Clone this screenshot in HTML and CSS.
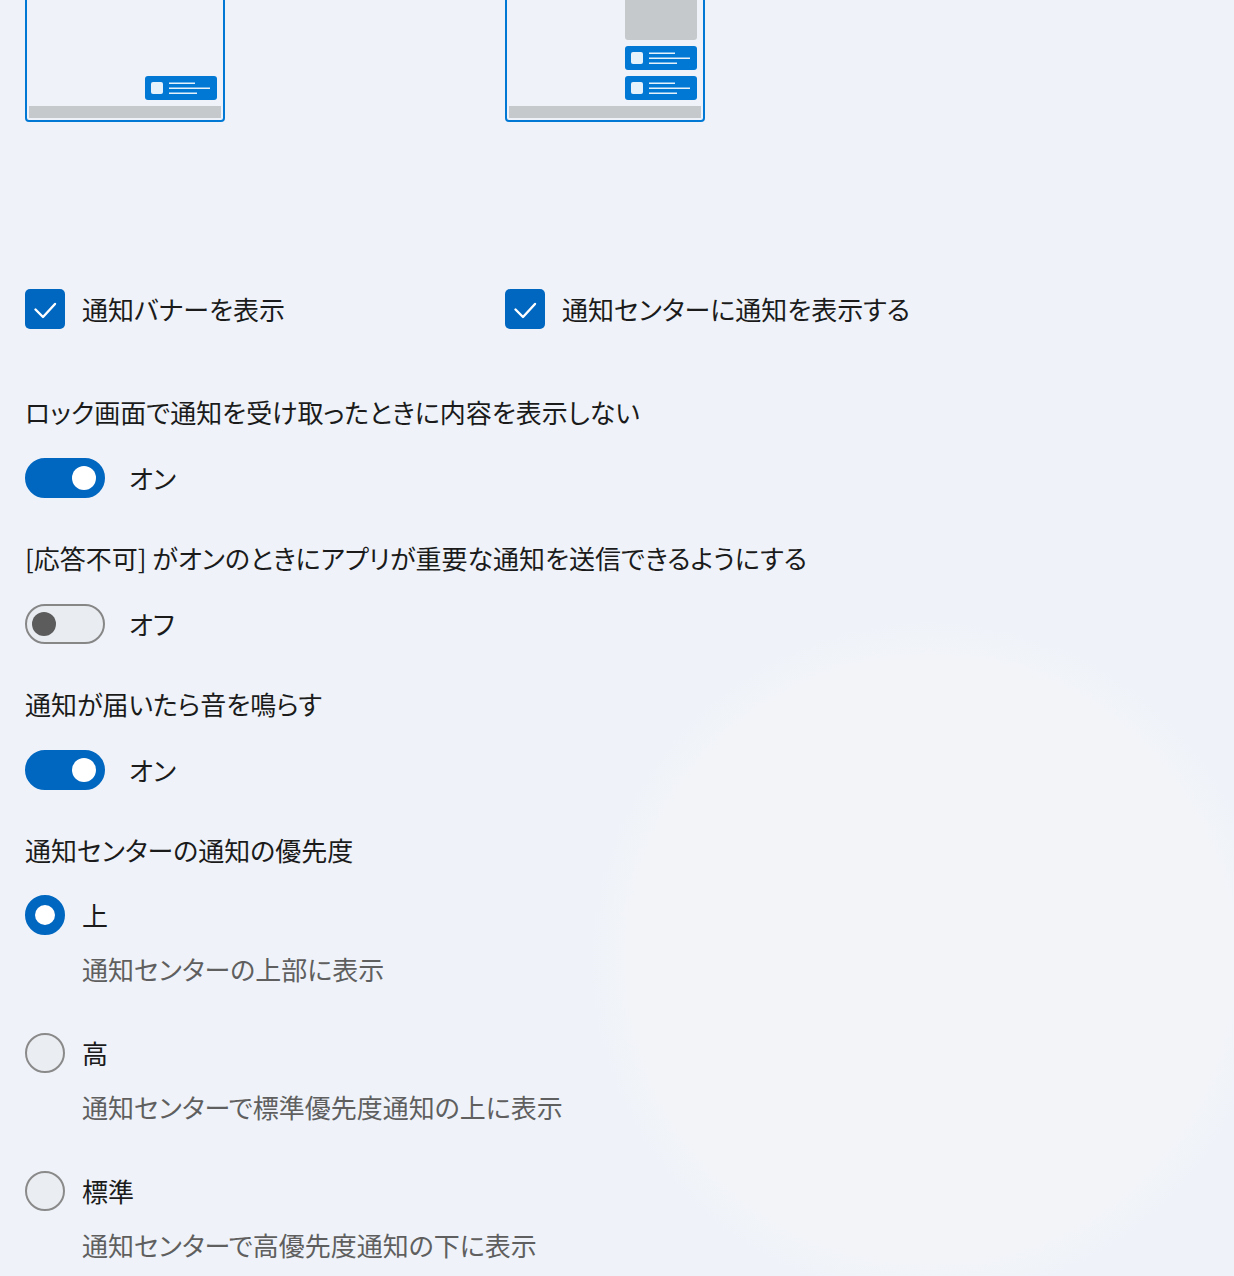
FILE: index.html
```html
<!DOCTYPE html>
<html lang="ja">
<head>
    <meta charset="UTF-8">
    <meta name="viewport" content="width=device-width, initial-scale=1.0">
    <title>通知</title>
    <link rel="stylesheet" href="styles.css">
</head>
<body>
    <div class="page">
        <div class="previews">
            <div class="preview">
                <div class="stack">
                    <svg class="banner" width="72" height="24" viewBox="0 0 72 24">
                        <rect width="72" height="24" rx="3" fill="#0078d4"/>
                        <rect x="6" y="6" width="12" height="12" rx="2" fill="#e5f1fb"/>
                        <rect x="24" y="6.5" width="26" height="1.5" fill="#e5f1fb"/>
                        <rect x="24" y="11.5" width="41" height="1.5" fill="#e5f1fb"/>
                        <rect x="24" y="16.5" width="28" height="1.5" fill="#e5f1fb"/>
                    </svg>
                </div>
                <div class="taskbar"></div>
            </div>
            <div class="preview">
                <div class="stack">
                    <div class="center-block"></div>
                    <svg class="banner" width="72" height="24" viewBox="0 0 72 24">
                        <rect width="72" height="24" rx="3" fill="#0078d4"/>
                        <rect x="6" y="6" width="12" height="12" rx="2" fill="#e5f1fb"/>
                        <rect x="24" y="6.5" width="26" height="1.5" fill="#e5f1fb"/>
                        <rect x="24" y="11.5" width="41" height="1.5" fill="#e5f1fb"/>
                        <rect x="24" y="16.5" width="28" height="1.5" fill="#e5f1fb"/>
                    </svg>
                    <svg class="banner" width="72" height="24" viewBox="0 0 72 24">
                        <rect width="72" height="24" rx="3" fill="#0078d4"/>
                        <rect x="6" y="6" width="12" height="12" rx="2" fill="#e5f1fb"/>
                        <rect x="24" y="6.5" width="26" height="1.5" fill="#e5f1fb"/>
                        <rect x="24" y="11.5" width="41" height="1.5" fill="#e5f1fb"/>
                        <rect x="24" y="16.5" width="28" height="1.5" fill="#e5f1fb"/>
                    </svg>
                </div>
                <div class="taskbar"></div>
            </div>
        </div>

        <div class="checks">
            <div class="check-row">
                <span class="checkbox">
                    <svg width="40" height="40" viewBox="0 0 40 40"><path d="M10.5 20.5l7.5 7.5 12-13" fill="none" stroke="#fff" stroke-width="2.4" stroke-linecap="round" stroke-linejoin="round"/></svg>
                </span>
                <span class="label">通知バナーを表示</span>
            </div>
            <div class="check-row">
                <span class="checkbox">
                    <svg width="40" height="40" viewBox="0 0 40 40"><path d="M10.5 20.5l7.5 7.5 12-13" fill="none" stroke="#fff" stroke-width="2.4" stroke-linecap="round" stroke-linejoin="round"/></svg>
                </span>
                <span class="label">通知センターに通知を表示する</span>
            </div>
        </div>

        <div class="setting">
            <div class="title">ロック画面で通知を受け取ったときに内容を表示しない</div>
            <div class="toggle-row">
                <span class="toggle on"><span class="knob"></span></span>
                <span class="state">オン</span>
            </div>
        </div>

        <div class="setting">
            <div class="title">[応答不可] がオンのときにアプリが重要な通知を送信できるようにする</div>
            <div class="toggle-row">
                <span class="toggle"><span class="knob"></span></span>
                <span class="state">オフ</span>
            </div>
        </div>

        <div class="setting">
            <div class="title">通知が届いたら音を鳴らす</div>
            <div class="toggle-row">
                <span class="toggle on"><span class="knob"></span></span>
                <span class="state">オン</span>
            </div>
        </div>

        <div class="setting">
            <div class="title">通知センターの通知の優先度</div>
            <div class="options">
                <div class="option">
                    <div class="radio-row">
                        <span class="radio selected"><span class="dot"></span></span>
                        <span class="label">上</span>
                    </div>
                    <div class="desc">通知センターの上部に表示</div>
                </div>
                <div class="option">
                    <div class="radio-row">
                        <span class="radio"></span>
                        <span class="label">高</span>
                    </div>
                    <div class="desc">通知センターで標準優先度通知の上に表示</div>
                </div>
                <div class="option">
                    <div class="radio-row">
                        <span class="radio"></span>
                        <span class="label">標準</span>
                    </div>
                    <div class="desc">通知センターで高優先度通知の下に表示</div>
                </div>
            </div>
        </div>
    </div>
</body>
</html>
```

FILE: styles.css
```css
body {
    margin: 0;
    height: 1276px;
    background-color: #eff3f9;
    background-image: radial-gradient(circle at 930px 960px, #f2f4f8 0, #f2f4f8 300px, rgba(239, 243, 249, 0) 340px);
    font-family: "Noto Sans CJK JP", "Noto Sans", sans-serif;
    font-size: 26px;
    font-feature-settings: "palt";
    color: #1b1b1b;
    overflow: hidden;
}
.page {
    margin-top: -40px; /* scrolled view, cards cut at the top */
    padding-left: 25px;
}
.previews {
    display: grid;
    grid-template-columns: 480px 480px;
}
.preview {
    width: 200px;
    height: 162px;
    box-sizing: border-box;
    border: 2px solid #0078d4;
    border-radius: 4px;
    padding: 2px;
    display: flex;
    flex-direction: column;
    justify-content: flex-end;
    gap: 6px;
    overflow: hidden;
}
.stack {
    display: flex;
    flex-direction: column;
    align-items: flex-end;
    gap: 6px;
    padding-right: 4px;
}
.banner {
    display: block;
    flex-shrink: 0;
}
.center-block {
    width: 72px;
    height: 76px;
    flex-shrink: 0;
    background-color: #c6c9cc;
    border-radius: 3px;
}
.taskbar {
    height: 12px;
    flex-shrink: 0;
    background-color: #c6c9cc;
}
.checks {
    display: grid;
    grid-template-columns: 480px 480px;
    margin-top: 167px;
}
.check-row, .toggle-row, .radio-row {
    display: flex;
    align-items: center;
    height: 40px;
}
.checkbox {
    width: 40px;
    height: 40px;
    border-radius: 5px;
    background-color: #0067c0;
    margin-right: 17px;
}
.checkbox svg {
    display: block;
}
.label, .title, .state, .desc {
    line-height: 40px;
}
.setting {
    margin-top: 63px;
}
.setting + .setting {
    margin-top: 40px;
}
.toggle-row {
    margin-top: 26px;
}
.toggle {
    position: relative;
    width: 80px;
    height: 40px;
    box-sizing: border-box;
    border-radius: 20px;
    border: 2px solid #878787;
    background-color: #e9edf2;
    margin-right: 24px;
}
.toggle .knob {
    position: absolute;
    top: 6px;
    left: 5px;
    width: 24px;
    height: 24px;
    border-radius: 50%;
    background-color: #5c5c5c;
}
.toggle.on {
    border-color: #0067c0;
    background-color: #0067c0;
}
.toggle.on .knob {
    left: auto;
    right: 7px;
    background-color: #fff;
}
.option {
    margin-top: 44px;
}
.option:first-child {
    margin-top: 25px;
}
.radio {
    width: 40px;
    height: 40px;
    box-sizing: border-box;
    border-radius: 50%;
    border: 2px solid #8a8a8a;
    background-color: #eaedf2;
    margin-right: 17px;
    display: flex;
    align-items: center;
    justify-content: center;
}
.radio.selected {
    border-color: #0067c0;
    background-color: #0067c0;
}
.radio .dot {
    width: 20px;
    height: 20px;
    border-radius: 50%;
    background-color: #fff;
}
.desc {
    margin-top: 14px;
    padding-left: 57px;
    color: #5f5f5f;
}
```
